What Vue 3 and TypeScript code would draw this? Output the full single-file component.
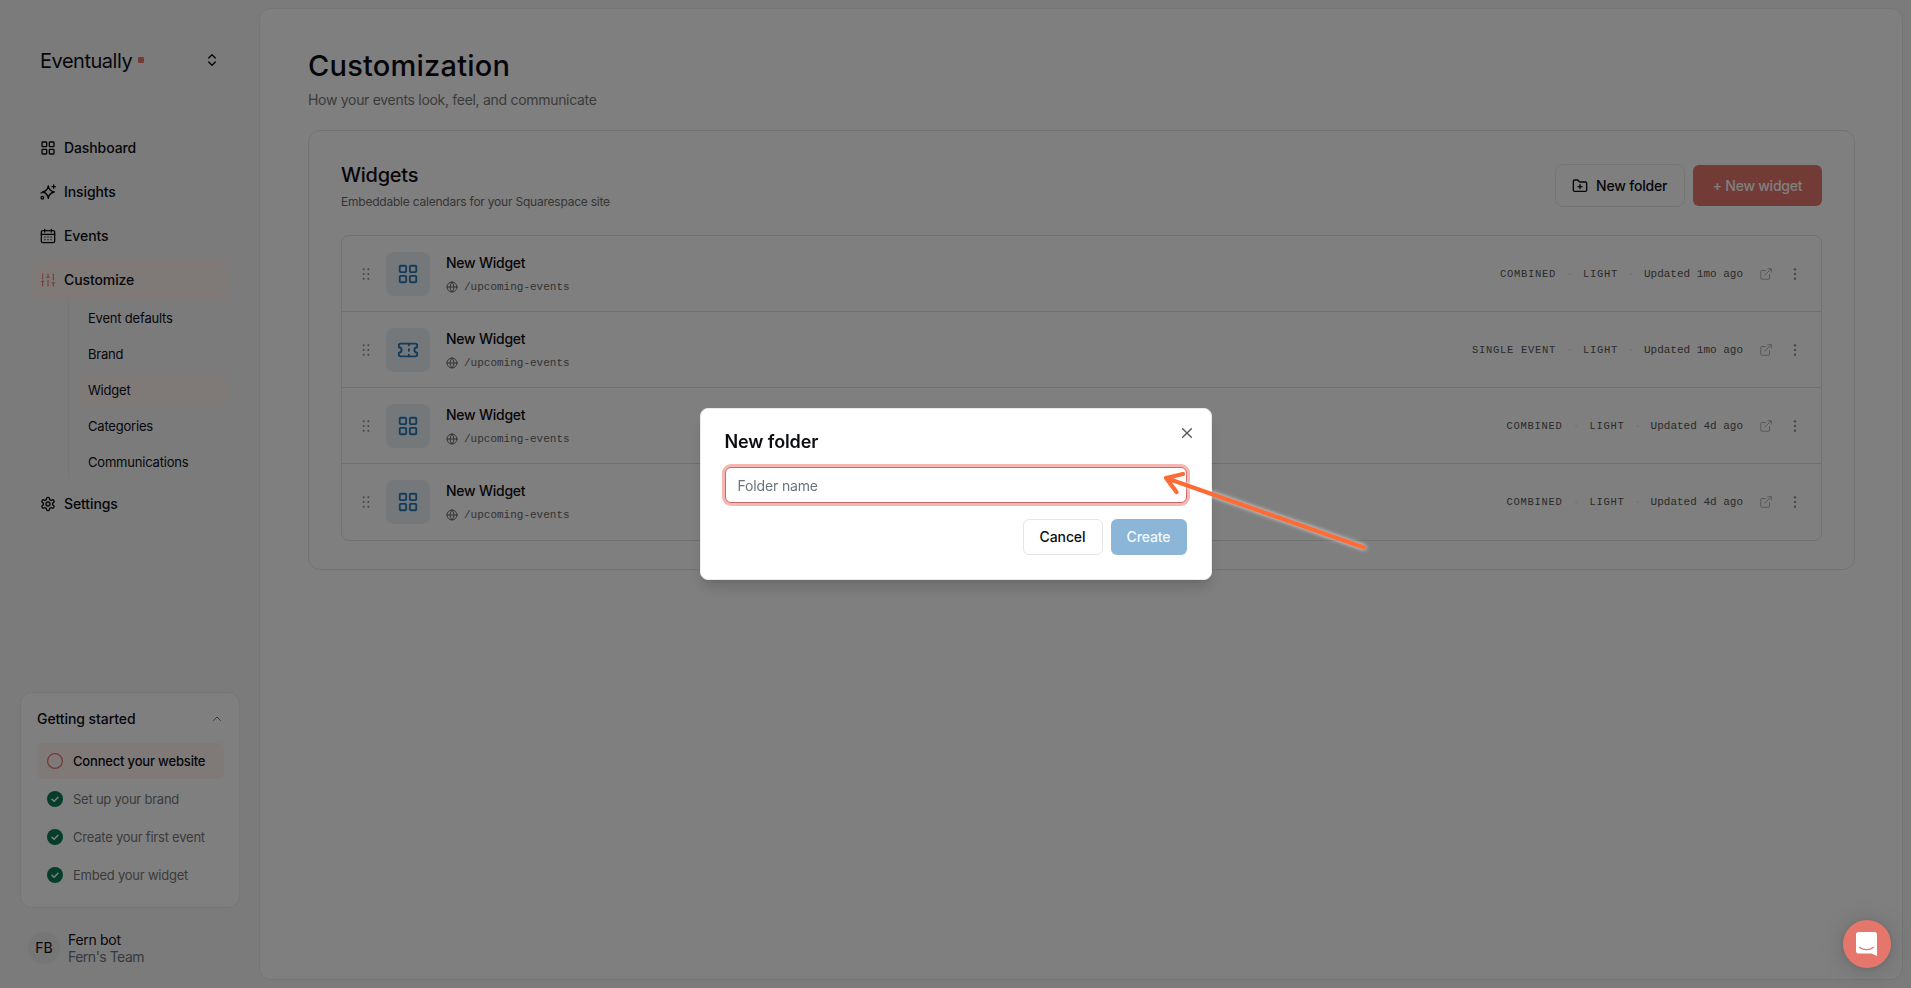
<script setup lang="ts">
interface NavItem {
  label: string
  icon: 'grid' | 'sparkle' | 'calendar'
}

interface Widget {
  name: string
  path: string
  kind: string
  theme: string
  updated: string
  ticket?: boolean
}

const navItems: NavItem[] = [
  { label: 'Dashboard', icon: 'grid' },
  { label: 'Insights', icon: 'sparkle' },
  { label: 'Events', icon: 'calendar' },
]

const subItems: string[] = ['Event defaults', 'Brand', 'Widget', 'Categories', 'Communications']
const activeSub = 'Widget'

const steps: { label: string; done: boolean }[] = [
  { label: 'Connect your website', done: false },
  { label: 'Set up your brand', done: true },
  { label: 'Create your first event', done: true },
  { label: 'Embed your widget', done: true },
]

const widgets: Widget[] = [
  { name: 'New Widget', path: '/upcoming-events', kind: 'COMBINED', theme: 'LIGHT', updated: 'Updated 1mo ago' },
  { name: 'New Widget', path: '/upcoming-events', kind: 'SINGLE EVENT', theme: 'LIGHT', updated: 'Updated 1mo ago', ticket: true },
  { name: 'New Widget', path: '/upcoming-events', kind: 'COMBINED', theme: 'LIGHT', updated: 'Updated 4d ago' },
  { name: 'New Widget', path: '/upcoming-events', kind: 'COMBINED', theme: 'LIGHT', updated: 'Updated 4d ago' },
]
</script>

<template>
  <div class="app">
    <aside class="sidebar">
      <div class="brand">
        <span class="brand-name">Eventually</span>
        <span class="brand-dot"></span>
        <svg class="icon brand-toggle" width="16" height="16" viewBox="0 0 24 24"><path d="m7 15 5 5 5-5" /><path d="m7 9 5-5 5 5" /></svg>
      </div>

      <nav class="nav">
        <a v-for="item in navItems" :key="item.label" class="nav-item">
          <svg class="icon" width="16" height="16" viewBox="0 0 24 24">
            <template v-if="item.icon === 'grid'">
              <rect x="3" y="3" width="7" height="7" rx="1" /><rect x="14" y="3" width="7" height="7" rx="1" />
              <rect x="14" y="14" width="7" height="7" rx="1" /><rect x="3" y="14" width="7" height="7" rx="1" />
            </template>
            <template v-else-if="item.icon === 'sparkle'">
              <path d="M12.500 3 Q13.500 10.500 21.500 12 Q13.500 13.500 12.500 21.500 Q11 13.500 4 12 Q11 10.500 12.500 3Z" />
              <path d="M20.500 1.500v5M23 4h-5" /><path d="M5 12 1.500 13.500" /><circle cx="3.500" cy="20.500" r="2" />
            </template>
            <template v-else>
              <rect x="2" y="4" width="20" height="18" rx="2" /><path d="M7 2v4M17 2v4M2 9.500h20" />
              <path d="M7.500 13.500h.01M12 13.500h.01M16.500 13.500h.01M7.500 17.500h.01M12 17.500h.01M16.500 17.500h.01" />
            </template>
          </svg>
          <span>{{ item.label }}</span>
        </a>
        <a class="nav-item active">
          <svg class="icon coral" width="16" height="16" viewBox="0 0 24 24"><path d="M4 21v-7M4 10V3M12 21v-9M12 8V3M20 21v-5M20 12V3M2 14h4M10 8h4M18 16h4" /></svg>
          <span>Customize</span>
        </a>
        <div class="subnav">
          <a v-for="label in subItems" :key="label" class="sub-item" :class="{ active: label === activeSub }">{{ label }}</a>
        </div>
        <a class="nav-item">
          <svg class="icon" width="16" height="16" viewBox="0 0 24 24">
            <path d="M12.22 2h-.44a2 2 0 0 0-2 2v.18a2 2 0 0 1-1 1.73l-.43.25a2 2 0 0 1-2 0l-.15-.08a2 2 0 0 0-2.73.73l-.22.38a2 2 0 0 0 .73 2.73l.15.1a2 2 0 0 1 1 1.72v.51a2 2 0 0 1-1 1.74l-.15.09a2 2 0 0 0-.73 2.73l.22.38a2 2 0 0 0 2.73.73l.15-.08a2 2 0 0 1 2 0l.43.25a2 2 0 0 1 1 1.73V20a2 2 0 0 0 2 2h.44a2 2 0 0 0 2-2v-.18a2 2 0 0 1 1-1.73l.43-.25a2 2 0 0 1 2 0l.15.08a2 2 0 0 0 2.73-.73l.22-.39a2 2 0 0 0-.73-2.73l-.15-.08a2 2 0 0 1-1-1.74v-.5a2 2 0 0 1 1-1.74l.15-.09a2 2 0 0 0 .73-2.73l-.22-.38a2 2 0 0 0-2.73-.73l-.15.08a2 2 0 0 1-2 0l-.43-.25a2 2 0 0 1-1-1.73V4a2 2 0 0 0-2-2z" />
            <circle cx="12" cy="12" r="3" />
          </svg>
          <span>Settings</span>
        </a>
      </nav>

      <section class="onboarding">
        <header class="onboarding-head">
          <span>Getting started</span>
          <svg class="icon muted" width="12" height="12" viewBox="0 0 24 24"><path d="m5 15 7-7 7 7" /></svg>
        </header>
        <div v-for="step in steps" :key="step.label" class="step" :class="{ current: !step.done }">
          <svg width="16" height="16" viewBox="0 0 16 16">
            <template v-if="step.done">
              <circle cx="8" cy="8" r="8" fill="#0a7a55" />
              <path d="m5 8.200 2.100 2.100L11 6.200" fill="none" stroke="#fff" stroke-width="1.500" stroke-linecap="round" stroke-linejoin="round" />
            </template>
            <circle v-else cx="8" cy="8" r="7.400" fill="none" stroke="#e5766c" stroke-width="1.200" />
          </svg>
          <span>{{ step.label }}</span>
        </div>
      </section>

      <footer class="account">
        <div class="avatar">FB</div>
        <div class="account-text">
          <div class="account-name">Fern bot</div>
          <div class="account-team">Fern's Team</div>
        </div>
      </footer>
    </aside>

    <main class="panel">
      <h1>Customization</h1>
      <p class="lead">How your events look, feel, and communicate</p>
      <section class="card">
        <header class="card-head">
          <div>
            <h2>Widgets</h2>
            <p>Embeddable calendars for your Squarespace site</p>
          </div>
          <div class="card-actions">
            <button class="btn-folder">
              <svg class="icon" width="16" height="16" viewBox="0 0 24 24"><path d="M12 10v6M9 13h6" /><path d="M20 20a2 2 0 0 0 2-2V8a2 2 0 0 0-2-2h-7.900a2 2 0 0 1-1.690-.9L9.600 3.900A2 2 0 0 0 7.930 3H4a2 2 0 0 0-2 2v13a2 2 0 0 0 2 2Z" /></svg>
              <span>New folder</span>
            </button>
            <button class="btn-widget"><span>+ New widget</span></button>
          </div>
        </header>
        <div class="list">
          <div v-for="(w, i) in widgets" :key="i" class="row">
            <svg class="grip" width="14" height="14" viewBox="0 0 24 24">
              <circle v-for="n in 6" :key="n" :cx="n % 2 ? 8 : 16" :cy="4 + Math.floor((n - 1) / 2) * 8" r="1.700" />
            </svg>
            <div class="tile">
              <svg v-if="w.ticket" class="icon" width="22" height="22" viewBox="0 0 24 24"><path d="M2 9a3 3 0 0 1 0 6v2a2 2 0 0 0 2 2h16a2 2 0 0 0 2-2v-2a3 3 0 0 1 0-6V7a2 2 0 0 0-2-2H4a2 2 0 0 0-2 2Z" /><path d="M13 5v2M13 17v2M13 11v2" /></svg>
              <svg v-else class="icon" width="22" height="22" viewBox="0 0 24 24">
                <rect x="3" y="3" width="7" height="7" rx="1" /><rect x="14" y="3" width="7" height="7" rx="1" />
                <rect x="14" y="14" width="7" height="7" rx="1" /><rect x="3" y="14" width="7" height="7" rx="1" />
              </svg>
            </div>
            <div class="row-text">
              <div class="row-name">{{ w.name }}</div>
              <div class="row-path">
                <svg class="icon" width="12" height="12" viewBox="0 0 24 24"><circle cx="12" cy="12" r="10" /><path d="M12 2a14.500 14.500 0 0 0 0 20 14.500 14.500 0 0 0 0-20M2 12h20" /></svg>
                <span>{{ w.path }}</span>
              </div>
            </div>
            <div class="meta">
              <span class="tag">{{ w.kind }}</span>
              <span class="sep">·</span>
              <span class="tag">{{ w.theme }}</span>
              <span class="sep last">·</span>
              <span class="updated">{{ w.updated }}</span>
            </div>
            <svg class="icon open" width="14" height="14" viewBox="0 0 24 24"><path d="M15 3h6v6M10 14 21 3M18 13v6a2 2 0 0 1-2 2H5a2 2 0 0 1-2-2V8a2 2 0 0 1 2-2h6" /></svg>
            <svg class="more" width="14" height="14" viewBox="0 0 24 24"><circle cx="12" cy="4" r="2" /><circle cx="12" cy="12" r="2" /><circle cx="12" cy="20" r="2" /></svg>
          </div>
        </div>
      </section>
    </main>

    <div class="overlay">
      <div class="dialog" role="dialog">
        <svg class="icon close" width="16" height="16" viewBox="0 0 24 24"><path d="M18.500 5.500l-13 13M5.500 5.500l13 13" /></svg>
        <h3>New folder</h3>
        <input type="text" placeholder="Folder name" />
        <div class="dialog-actions">
          <button class="cancel"><span>Cancel</span></button>
          <button class="create"><span>Create</span></button>
        </div>
      </div>
    </div>

    <svg class="pointer" width="230" height="100" viewBox="0 0 230 100">
      <path d="M214 77.500 16 8M33 4 16 8 26.500 22" />
    </svg>

    <div class="chat">
      <svg width="24" height="26" viewBox="0 0 24 26">
        <path d="M4 1h15.500a2.500 2.500 0 0 1 2.500 2.500V25l-5.500-2.500H4A2.500 2.500 0 0 1 1 20V3.500A2.500 2.500 0 0 1 4 1z" fill="#fff" />
        <path d="M4.500 16.200c4 3.200 10 3.200 14 0" fill="none" stroke="#e5766c" stroke-width="1.300" stroke-linecap="round" />
      </svg>
    </div>
  </div>
</template>

<style>
html,
body {
  margin: 0;
  height: 100%;
  overflow: hidden;
}
</style>

<style scoped>
.app {
  display: flex;
  width: 100vw;
  height: 100vh;
  box-sizing: border-box;
  padding: 8px 8px 8px 0;
  background: #f7f7f7;
  color: #0c0d14;
  font-family: Inter, "Liberation Sans", sans-serif;
  font-size: 14px;
  line-height: 20px;
}
.app * { box-sizing: border-box; }
h1, h2, h3, p { margin: 0; font-weight: 500; }
button, input { font: inherit; color: inherit; margin: 0; }
.icon { flex: none; fill: none; stroke: currentColor; stroke-width: 2; stroke-linecap: round; stroke-linejoin: round; }
.coral { color: #e5766c; stroke-width: 1.6; }
.muted { color: #777; }

.sidebar { width: 259px; flex: none; display: flex; flex-direction: column; }
.brand { display: flex; align-items: center; height: 40px; margin: 32px 39px 0 40px; }
.brand-name { font-size: 20px; letter-spacing: -0.48px; line-height: 24px; padding-top: 1px; }
.brand-dot { width: 6px; height: 6px; margin-left: 6px; border-radius: 1px; background: #e5766c; }
.brand-toggle { margin-left: auto; }
.nav { display: flex; flex-direction: column; gap: 4px; margin: 48px 31px 0 32px; }
.nav-item { display: flex; align-items: center; gap: 8px; height: 40px; padding: 0 8px; border-radius: 6px; font-weight: 500; letter-spacing: -0.1px; }
.nav-item.active, .sub-item.active { background: #fff2ee; }
.subnav { display: flex; flex-direction: column; gap: 4px; margin: -2px 0 2px 36px; padding-left: 11px; border-left: 1px solid #ebebeb; }
.sub-item { height: 32px; padding: 0 8px; border-radius: 6px; font-size: 13px; line-height: 32px; letter-spacing: -0.2px; }

.onboarding { margin: auto 19px 0 20px; height: 216px; padding: 16px 15px; border: 1px solid #ebebeb; border-radius: 12px; background: #fff; }
.onboarding-head { display: flex; align-items: center; justify-content: space-between; height: 20px; margin-bottom: 14px; padding: 0 1px; font-weight: 500; letter-spacing: -0.08px; }
.step { display: flex; align-items: center; gap: 10px; height: 36px; margin: 0 0 2px 1px; padding: 0 10px; border-radius: 6px; font-size: 13px; color: #777; letter-spacing: -0.23px; }
.step.current { background: #fff2ee; color: #0c0d14; font-weight: 500; letter-spacing: -0.18px; }
.account { display: flex; align-items: center; gap: 8px; height: 36px; margin: 22px 28px 14px; }
.avatar { width: 32px; height: 32px; border-radius: 50%; background: #ececec; text-align: center; line-height: 32px; }
.account-name, .account-team { line-height: 17px; letter-spacing: -0.3px; }
.account-team { color: #6b7280; letter-spacing: -0.5px; }

.panel { flex: 1; border: 1px solid #ebebeb; border-radius: 12px; background: #fff; padding: 35px 47px 0 48px; }
h1 { font-size: 29px; line-height: 44px; font-weight: 500; letter-spacing: 0.22px; }
.lead { margin-top: 2px; color: #777; line-height: 20px; font-weight: 400; letter-spacing: -0.3px; }
.card { margin-top: 20px; height: 440px; padding: 32px; border: 1px solid #e5e5e5; border-radius: 12px; }
.card-head { display: flex; justify-content: space-between; height: 72px; }
h2 { margin-top: -2px; font-size: 20px; line-height: 28px; letter-spacing: -0.25px; }
.card-head p { margin-top: 4px; font-size: 12px; line-height: 18px; color: #6c6c6c; font-weight: 400; letter-spacing: -0.22px; }
.card-actions { display: flex; align-items: center; gap: 8px; height: 43px; margin-top: 1px; }
.btn-folder { display: flex; align-items: center; gap: 8px; width: 130px; height: 43px; padding: 0 16px; border: 1px solid #e8e8e8; border-radius: 8px; background: #fff; font-weight: 500; white-space: nowrap; letter-spacing: -0.18px; }
.btn-widget { width: 129px; height: 41px; padding: 0; border: 0; border-radius: 6px; background: #e5766c; color: #fff; font-weight: 500; white-space: nowrap; letter-spacing: -0.25px; }

.list { border: 1px solid #e2e2e2; border-radius: 8px; }
.row { display: flex; align-items: center; height: 76px; padding: 0 19px 0 17px; }
.row + .row { box-shadow: 0 -1px 0 #dedede; }
.grip { fill: #8a8a8a; }
.tile { display: grid; place-items: center; width: 44px; height: 44px; margin-left: 13px; border-radius: 8px; background: #e9f1f7; color: #2478b5; }
.row-text { margin-left: 16px; padding-top: 1px; }
.row-name { font-weight: 500; line-height: 20px; letter-spacing: -0.25px; }
.row-path { display: flex; align-items: center; gap: 6px; margin-top: 5px; color: #666; font: 11px/18px "Liberation Mono", monospace; }
.meta { display: flex; align-items: center; margin-left: auto; color: #555; font: 11px/18px "Liberation Mono", monospace; }
.tag { font-size: 10.5px; letter-spacing: 0.7px; }
.sep { width: 27px; text-align: center; color: #dedede; }
.sep.last { width: 26px; }
.updated { color: #555; }
.open { margin-left: 16px; color: #aaa; stroke-width: 1.6; }
.more { margin-left: 15px; fill: #8a8a8a; }

.overlay { position: fixed; inset: 0; display: flex; align-items: center; justify-content: center; background: rgba(0, 0, 0, 0.5); }
.dialog { position: relative; width: 512px; height: 172px; padding: 24px; border: 1px solid #ebebeb; border-radius: 8px; background: #fff; box-shadow: 0 10px 15px -3px rgba(0, 0, 0, 0.15), 0 4px 6px -4px rgba(0, 0, 0, 0.15); }
.close { position: absolute; top: 16px; right: 16px; color: #555; }
h3 { font-size: 18px; line-height: 18px; font-weight: 600; letter-spacing: -0.12px; }
input { display: block; width: 462px; height: 36px; margin-top: 16px; padding: 0 12px; border: 1px solid #c96a66; border-radius: 6px; outline: 0; background: #fff; box-shadow: 0 0 0 3px #f6b6b2; letter-spacing: -0.15px; }
input::placeholder { color: #6b7280; opacity: 1; }
.dialog-actions { display: flex; justify-content: flex-end; gap: 8px; margin-top: 16px; }
.dialog-actions button { height: 36px; padding: 0; border-radius: 6px; font-weight: 500; letter-spacing: -0.12px; }
.cancel { width: 80px; border: 1px solid #e5e5e5; background: #fff; }
.create { width: 76px; border: 0; background: #8bb6d8; color: #f4f8fc; }
.pointer { position: absolute; left: 1150px; top: 470px; overflow: visible; fill: none; stroke: #ff6b35; stroke-width: 4.2; stroke-linecap: round; stroke-linejoin: round; filter: drop-shadow(0 0 2px rgba(255, 255, 255, 0.8)); }
.chat { position: fixed; right: 20px; bottom: 20px; display: grid; place-items: center; width: 48px; height: 48px; border-radius: 50%; background: #e5766c; box-shadow: 0 1px 6px rgba(0, 0, 0, 0.1), 0 2px 24px rgba(0, 0, 0, 0.16); }
</style>
